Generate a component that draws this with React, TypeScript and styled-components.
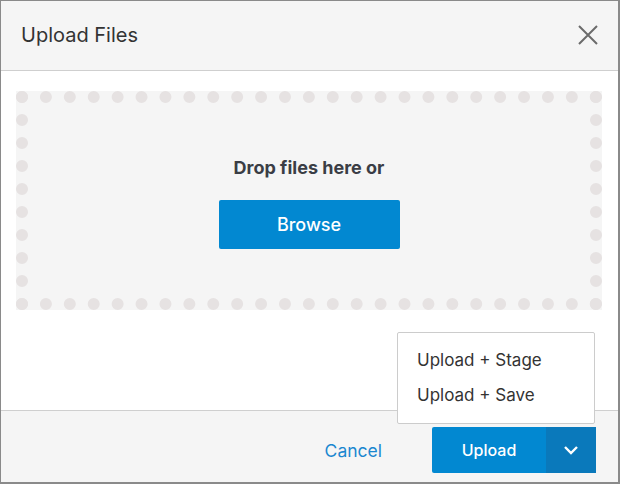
import React, { useState } from "react";
import styled, { createGlobalStyle } from "styled-components";

const GlobalStyle = createGlobalStyle`
  html, body {
    margin: 0;
    padding: 0;
    background: #ffffff;
  }
  * {
    box-sizing: border-box;
  }
`;

const Modal = styled.div`
  width: 620px;
  height: 484px;
  display: flex;
  flex-direction: column;
  border: 1px solid #8a8a8a;
  border-right-width: 2px;
  border-bottom-width: 2px;
  font-family: Inter, "Liberation Sans", sans-serif;
  color: #333333;
  background: #ffffff;
`;

const Header = styled.div`
  height: 70px;
  flex: 0 0 auto;
  display: flex;
  align-items: center;
  justify-content: space-between;
  padding: 0 20px 2px 20px;
  background: #f5f5f5;
  border-bottom: 1px solid #cfcfcf;
`;

const Title = styled.h2`
  margin: 0;
  font-size: 20px;
  font-weight: 400;
  color: #333333;
`;

const CloseButton = styled.button`
  width: 20px;
  height: 20px;
  padding: 0;
  border: none;
  background: none;
  display: flex;
  align-items: center;
  justify-content: center;
  cursor: pointer;
`;

const Body = styled.div`
  flex: 1 1 auto;
  padding: 20px 16px 0 15px;
`;

const DropZone = styled.div`
  height: 219px;
  padding-top: 4px;
  border: 12px dotted #e6e2e2;
  background: #f5f5f5;
  display: flex;
  flex-direction: column;
  align-items: center;
  justify-content: center;
  gap: 22px;
`;

const DropText = styled.div`
  font-size: 18px;
  font-weight: 700;
  color: #3a3d45;
`;

const PrimaryButton = styled.button`
  height: 49px;
  width: 181px;
  border: none;
  border-radius: 2px;
  background: #0288d1;
  color: #ffffff;
  font-family: inherit;
  font-size: 18px;
  font-weight: 500;
  cursor: pointer;
`;

const Footer = styled.div`
  flex: 0 0 72px;
  display: flex;
  align-items: flex-start;
  justify-content: flex-end;
  padding: 16px 22px 0 0;
  gap: 50px;
  background: #f5f5f5;
  border-top: 1px solid #cfcfcf;
`;

const TextButton = styled.button`
  height: 46px;
  padding: 0;
  border: none;
  background: none;
  color: #1a87d0;
  font-family: inherit;
  font-size: 17.5px;
  cursor: pointer;
`;

const SplitButton = styled.div`
  position: relative;
  display: flex;
  height: 46px;
`;

const SplitMain = styled.button`
  width: 114px;
  border: none;
  border-radius: 2px 0 0 2px;
  background: #0288d1;
  color: #ffffff;
  font-family: inherit;
  font-size: 16px;
  font-weight: 500;
  cursor: pointer;
`;

const SplitToggle = styled.button`
  width: 50px;
  border: none;
  background: #0a79bb;
  display: flex;
  align-items: center;
  justify-content: center;
  cursor: pointer;
`;

const Menu = styled.ul`
  position: absolute;
  right: 1px;
  bottom: calc(100% + 3px);
  width: 198px;
  margin: 0;
  padding: 10px 0;
  list-style: none;
  background: #ffffff;
  border: 1px solid #cccccc;
  border-radius: 2px;
`;

const MenuItem = styled.li`
  height: 35px;
  line-height: 35px;
  padding: 0 19px;
  font-size: 17px;
  color: #333333;
  cursor: pointer;
`;

export default function App() {
  const [menuOpen, setMenuOpen] = useState(true);

  return (
    <>
      <GlobalStyle />
      <Modal>
        <Header>
          <Title>Upload Files</Title>
          <CloseButton aria-label="Close">
            <svg width="20" height="20" viewBox="0 0 20 20">
              <path
                d="M1 1 L19 19 M19 1 L1 19"
                stroke="#6b6b6b"
                strokeWidth="2"
                fill="none"
              />
            </svg>
          </CloseButton>
        </Header>
        <Body>
          <DropZone>
            <DropText>Drop files here or</DropText>
            <PrimaryButton>Browse</PrimaryButton>
          </DropZone>
        </Body>
        <Footer>
          <TextButton>Cancel</TextButton>
          <SplitButton>
            <SplitMain>Upload</SplitMain>
            <SplitToggle onClick={() => setMenuOpen((o) => !o)}>
              <svg width="16" height="10" viewBox="0 0 16 10">
                <path
                  d="M2 2 L8 8 L14 2"
                  stroke="#ffffff"
                  strokeWidth="2.4"
                  fill="none"
                />
              </svg>
            </SplitToggle>
            {menuOpen && (
              <Menu>
                <MenuItem>Upload + Stage</MenuItem>
                <MenuItem>Upload + Save</MenuItem>
              </Menu>
            )}
          </SplitButton>
        </Footer>
      </Modal>
    </>
  );
}
